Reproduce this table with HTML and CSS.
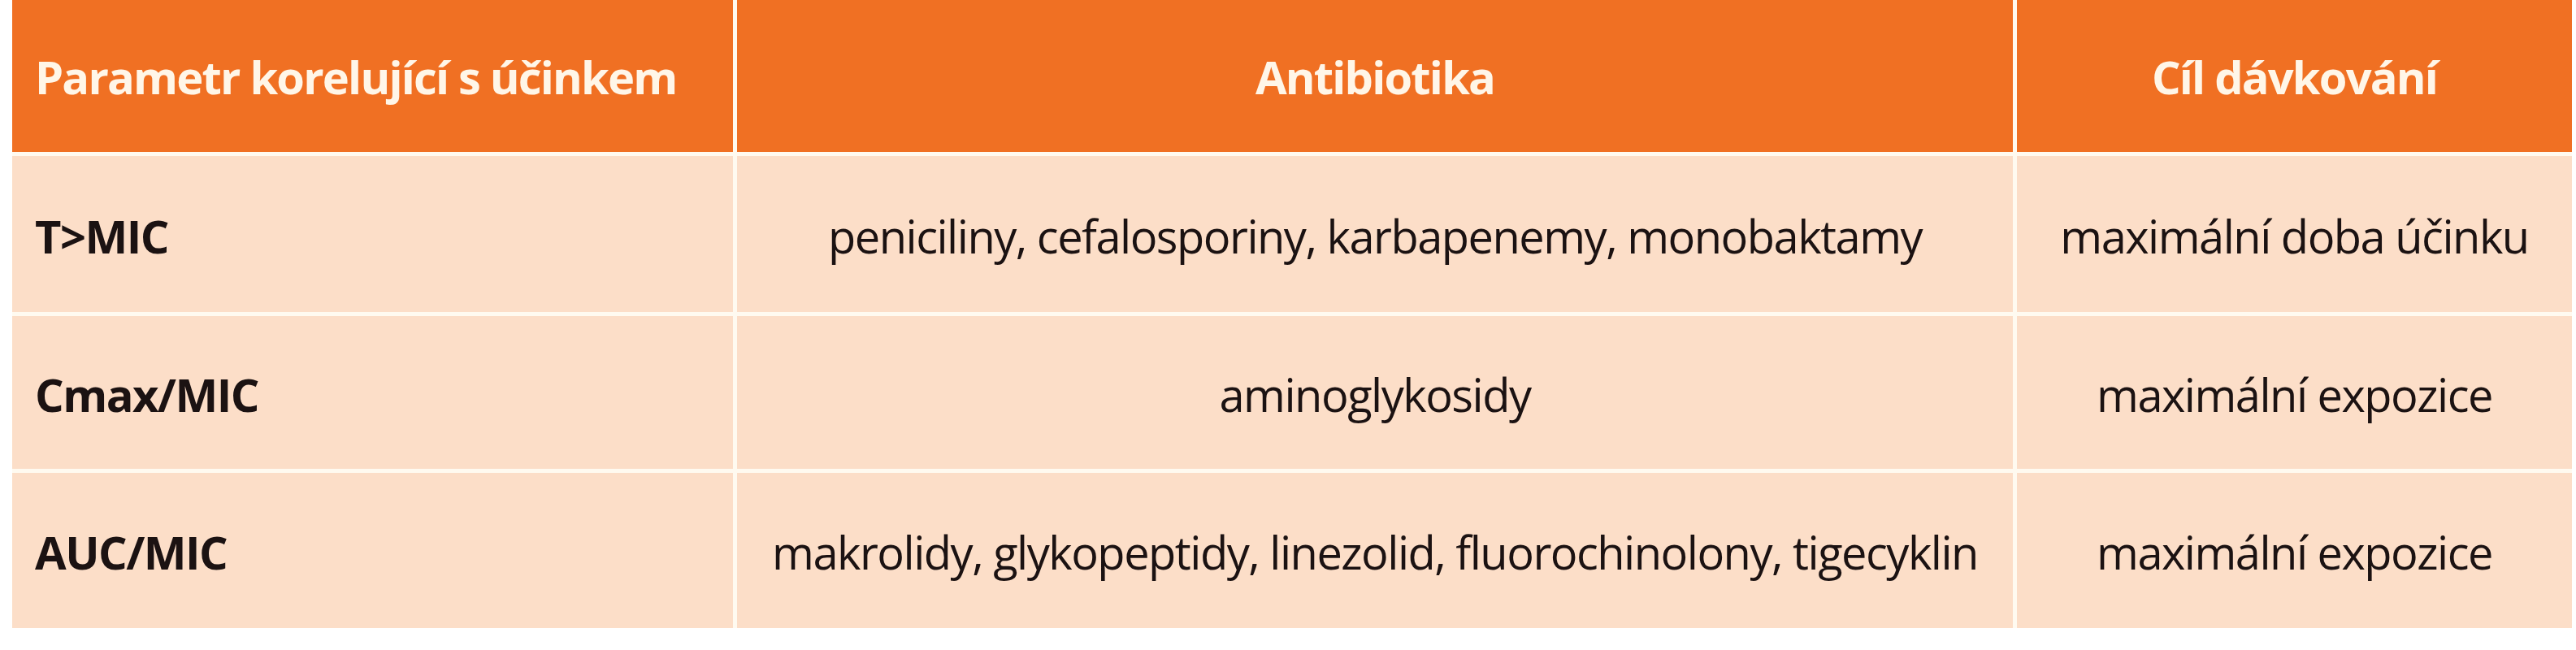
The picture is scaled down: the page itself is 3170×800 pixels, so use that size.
FILE: index.html
```html
<!DOCTYPE html>
<html lang="cs">
<head>
<meta charset="utf-8">
<title>Parametry PK/PD</title>
<link rel="stylesheet" href="styles.css">
</head>
<body>
<div class="table">
  <div class="cell head left">Parametr korelující s účinkem</div>
  <div class="cell head">Antibiotika</div>
  <div class="cell head">Cíl dávkování</div>

  <div class="cell row1 left param">T&gt;MIC</div>
  <div class="cell row1">peniciliny, cefalosporiny, karbapenemy, monobaktamy</div>
  <div class="cell row1">maximální doba účinku</div>

  <div class="cell row2 left param">Cmax/MIC</div>
  <div class="cell row2">aminoglykosidy</div>
  <div class="cell row2">maximální expozice</div>

  <div class="cell row3 left param">AUC/MIC</div>
  <div class="cell row3">makrolidy, glykopeptidy, linezolid, fluorochinolony, tigecyklin</div>
  <div class="cell row3">maximální expozice</div>
</div>
</body>
</html>
```

FILE: styles.css
```css
html, body {
  margin: 0;
  padding: 0;
  background: #ffffff;
}

body {
  width: 3170px;
  height: 800px;
  overflow: hidden;
  font-family: "Open Sans", "Noto Sans", "DejaVu Sans", sans-serif;
}

.table {
  margin-left: 15px;
  display: grid;
  grid-template-columns: 887px 1570px 683px;
  grid-template-rows: 187px 192px 188px 191px;
  gap: 5px;
  background: #fffaf0;
  width: 3150px;
}

.cell {
  display: flex;
  align-items: center;
  justify-content: center;
  padding-top: 3px;
  background: #fcdec8;
  color: #1b1212;
  font-size: 56px;
  letter-spacing: -1.5px;
  white-space: nowrap;
}

.cell.left {
  justify-content: flex-start;
  padding-left: 28px;
}

.cell.head {
  padding-top: 0;
  background: #f07023;
  color: #fff6e8;
  font-weight: 700;
  letter-spacing: -1.8px;
}

.cell.param {
  font-weight: 700;
}
```
